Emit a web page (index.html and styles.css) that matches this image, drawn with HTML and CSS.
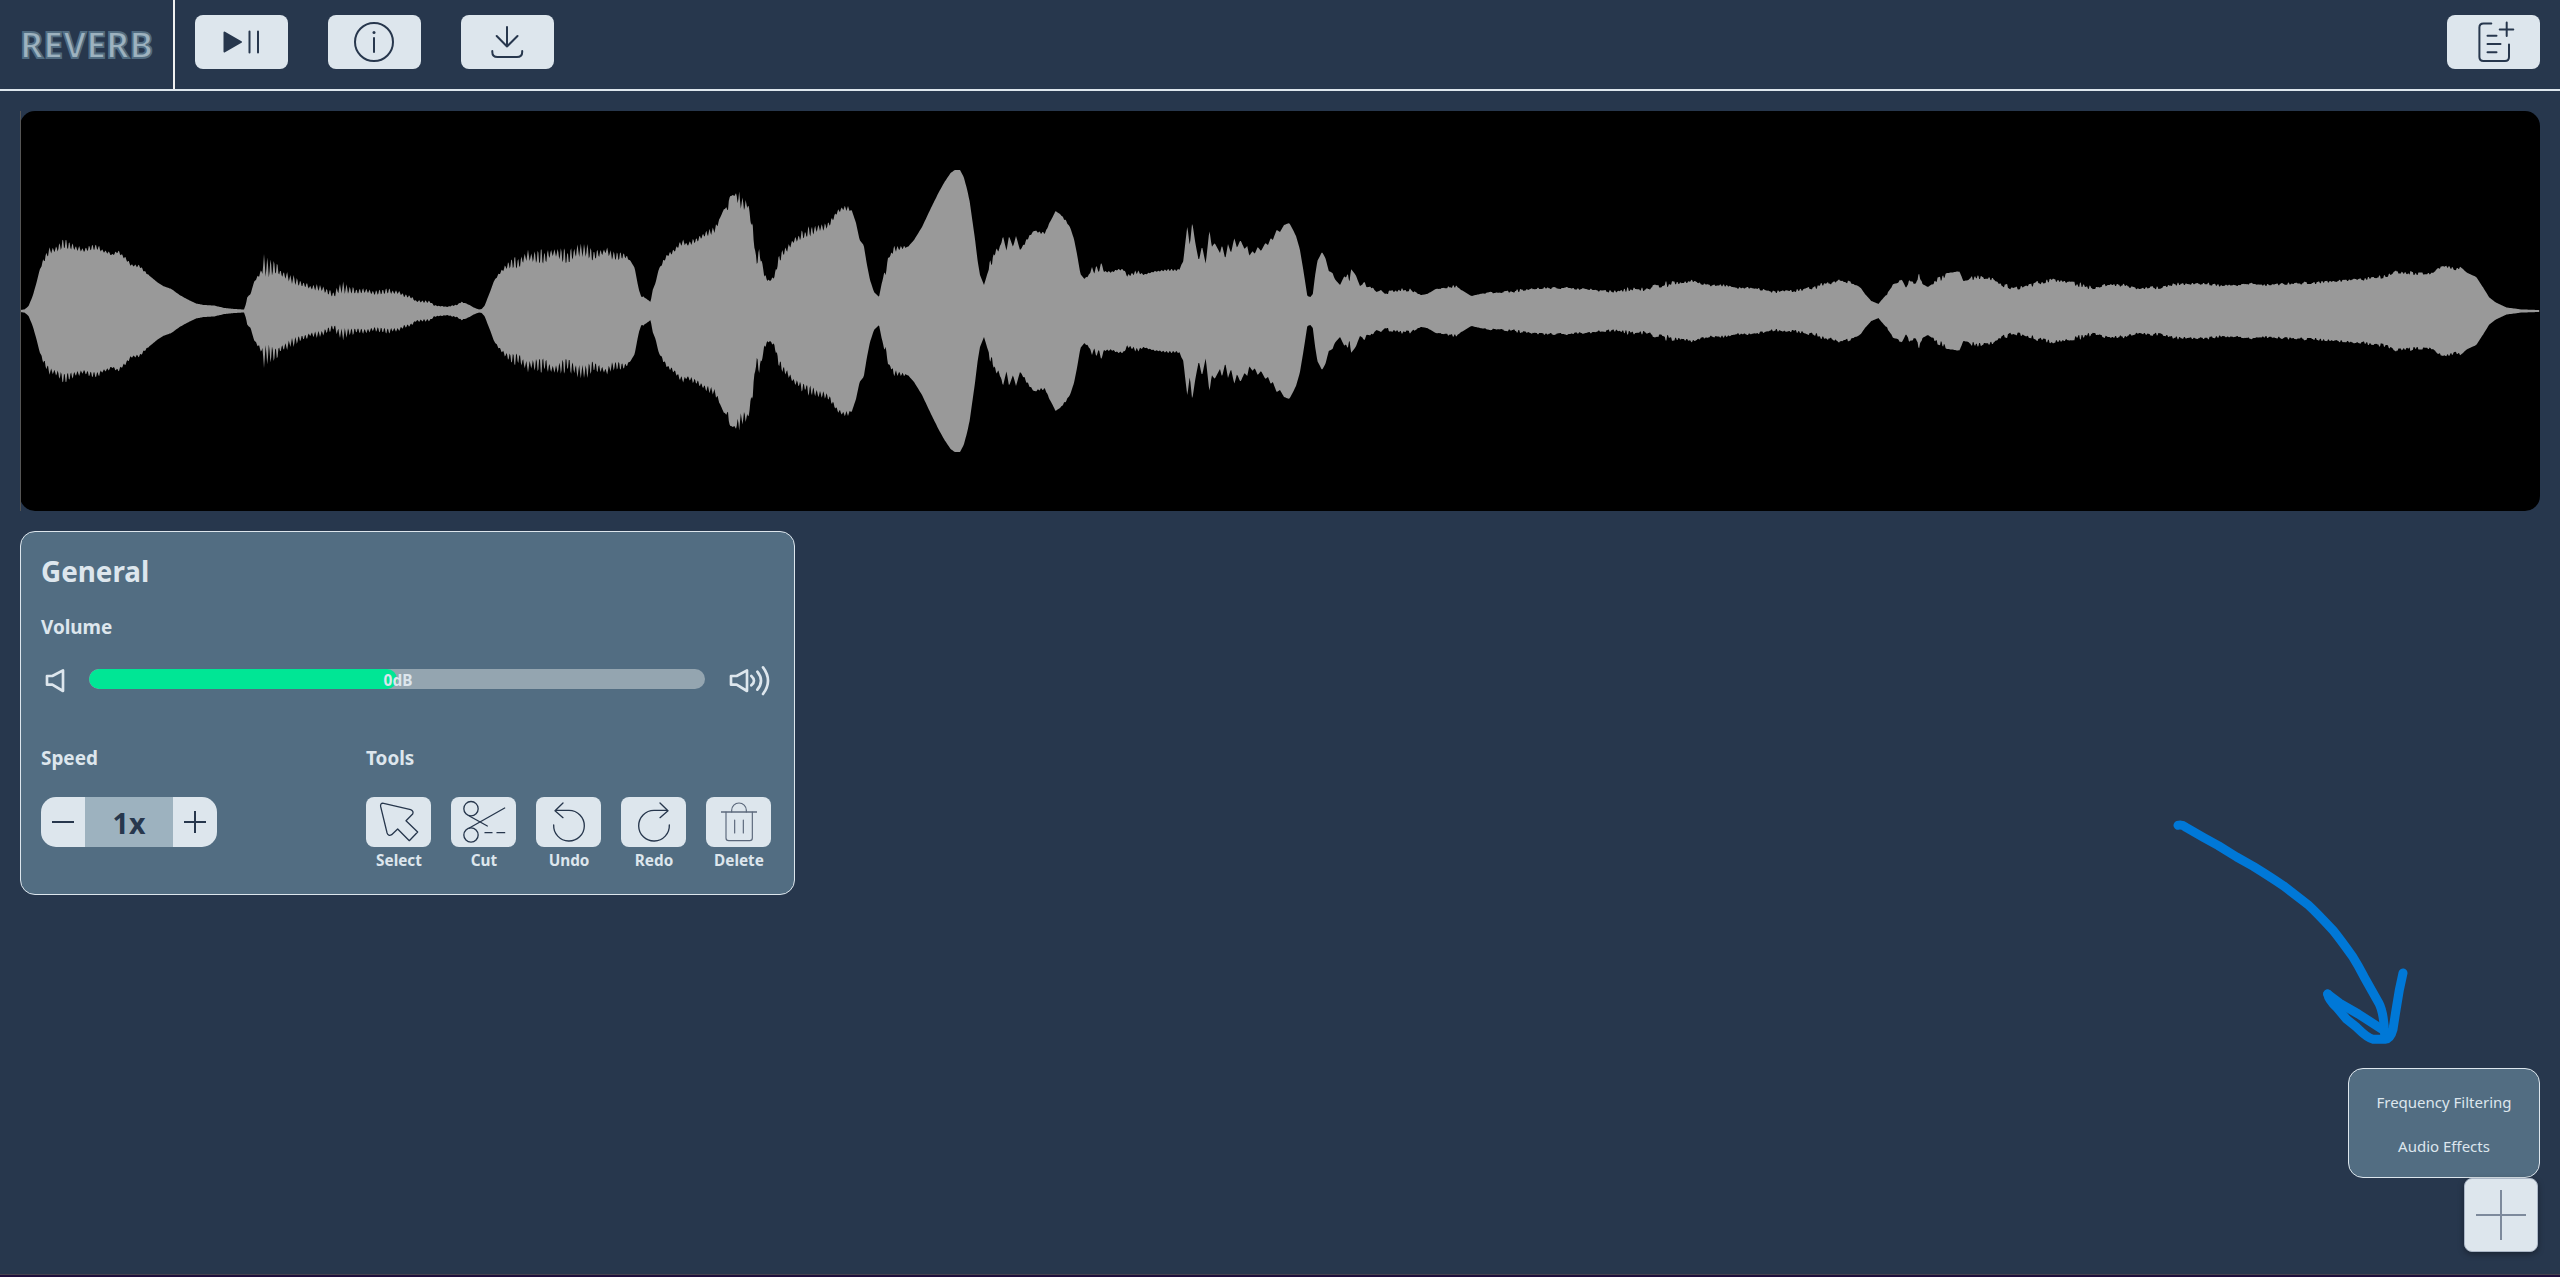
FILE: index.html
```html
<!DOCTYPE html>
<html lang="en">
<head>
<meta charset="utf-8">
<title>Reverb</title>
<link rel="stylesheet" href="styles.css">
</head>
<body>
<div class="app">
  <header class="topbar">
    <div class="logo"><span class="logo-text">REVERB</span></div>
    <nav class="actions">
      <button class="action" aria-label="Play or pause">
        <svg viewBox="0 0 93 54"><path class="solid" d="M29.5 17.500L46 27L29.5 36.500Z"/><path d="M54.5 16.5V37.500M63 16.500V37.500"/></svg>
      </button>
      <button class="action" aria-label="Info">
        <svg viewBox="0 0 93 54"><circle cx="46" cy="27" r="19"/><circle class="solid dot" cx="46" cy="17.500" r="1.500"/><path d="M46 23V37"/></svg>
      </button>
      <button class="action" aria-label="Download">
        <svg viewBox="0 0 93 54"><path d="M46 12V31.500M35.700 21L46 31.500L56.500 21M31.300 36V37Q31.300 42 36.500 42H56Q61.200 42 61.200 37V36"/></svg>
      </button>
      <button class="action action-end" aria-label="New file">
        <svg viewBox="0 0 93 54"><path d="M44.300 8.400H36.500Q32.400 8.400 32.400 12.500V42Q32.400 46 36.500 46H58Q62 46 62 42V29.500M59.700 7.500V21M52.700 14.400H66.300M40.500 20.700H49.500M40.500 29H53.500M40.500 37.300H49.500"/></svg>
      </button>
    </nav>
  </header>

  <section class="wave">
    <svg class="wave-svg" viewBox="20 -200 2520 400" preserveAspectRatio="none"><path id="wave-path"/></svg>
    <div class="cursor"></div>
  </section>

  <section class="panel">
    <h1 class="title">General</h1>
    <h2 class="label label-volume">Volume</h2>
    <div class="volume">
      <svg class="speaker-low" viewBox="0 0 144 120"><path d="M18 45H34L66 28V90L34 71H18Z"/></svg>
      <div class="slider"><div class="slider-fill" style="width:50%"></div><span class="slider-value">0dB</span></div>
      <svg class="speaker-high" viewBox="0 0 204 120"><path d="M78 45H95L126 28V90L95 71H78Z"/><path d="M139 45Q155 59 139 73M157 32Q179 59 157 86M174 19Q204 59 174 99"/></svg>
    </div>
    <div class="controls">
      <div class="group">
        <h2 class="label">Speed</h2>
        <div class="stepper">
          <button class="step" aria-label="Slower"><svg viewBox="0 0 44 50"><path d="M11 25H33"/></svg></button>
          <div class="step-value">1x</div>
          <button class="step" aria-label="Faster"><svg viewBox="0 0 44 50"><path d="M11 25H33M22 14V36"/></svg></button>
        </div>
      </div>
      <div class="group">
        <h2 class="label">Tools</h2>
        <div class="tools">
          <div class="tool"><button class="tool-btn"><svg viewBox="0 0 195 150"><path d="M44 29Q42 17 53 19L134 38Q144 42 140 51L120 71L155 105L130 131L95 96L77 113Q67 119 63 107Z"/></svg></button><span class="tool-name">Select</span></div>
          <div class="tool"><button class="tool-btn"><svg viewBox="0 0 195 150"><circle cx="60" cy="35" r="21.500"/><circle cx="60" cy="114" r="21.500"/><path d="M55 57L109 87M55 93L161 33M102 107H123M138 107H161"/></svg></button><span class="tool-name">Cut</span></div>
          <div class="tool"><button class="tool-btn"><svg viewBox="0 0 195 150"><path d="M53 84A46 46 0 1 0 99 40H58M81 18L57 41L81 62"/></svg></button><span class="tool-name">Undo</span></div>
          <div class="tool"><button class="tool-btn"><svg viewBox="0 0 195 150"><path d="M145 84A46 46 0 1 1 99 40H140M117 18L141 41L117 62"/></svg></button><span class="tool-name">Redo</span></div>
          <div class="tool"><button class="tool-btn"><svg class="thin" viewBox="0 0 195 150"><path d="M60 45V123Q60 131 68 131H131Q139 131 139 123V45M77 45V40A22 22 0 0 1 121 40V45M86 69V108M112 69V108"/><path class="lid" d="M45 45H153"/></svg></button><span class="tool-name">Delete</span></div>
        </div>
      </div>
    </div>
  </section>

  <div class="adder">
    <div class="menu">
      <div class="menu-item">Frequency Filtering</div>
      <div class="menu-item">Audio Effects</div>
    </div>
    <button class="fab" aria-label="Add module"><svg viewBox="0 0 74 74"><path d="M12 37H62M37 12V62"/></svg></button>
  </div>

  <svg class="arrow" viewBox="60 81 720 690"><path d="M84 106Q95 102 108 112L160 142L205 167L260 201L310 229Q360 260 400 287L475 345Q500 368 550 422Q570 447 608 500Q625 527 642 560L686 638Q702 668 704 735"/><path d="M533 612L570 640L625 672L712 728"/><path d="M533 612Q536 630 560 652L590 688L620 712Q652 744 670 748H705Q722 746 729 718L738 660L748 600L759 549"/></svg>
</div>
<div class="edge"></div>
<script src="wave.js"></script>
</body>
</html>
```
FILE: styles.css
```css
* { box-sizing: border-box; }
body {
  margin: 0;
  background: #27374d;
  color: #dde6ed;
  font-family: "Noto Sans", "Open Sans", sans-serif;
}
button { border: 0; padding: 0; margin: 0; background: #dde6ed; display: block; }
h1, h2 { margin: 0; }
svg { display: block; fill: none; stroke: #27374d; stroke-linecap: round; stroke-linejoin: round; }

.app { position: relative; height: 1274px; display: flex; flex-direction: column; overflow: hidden; }
.edge { height: 3px; background: #1e0f3c; border-top: 1px solid #47434e; }

.topbar { display: flex; height: 91px; border-bottom: 2px solid #dde6ed; }
.logo { width: 175px; border-right: 2px solid #f0f0f0; padding-left: 20px; display: flex; align-items: center; }
.logo-text {
  font-size: 35.5px; font-weight: 700; line-height: 50px; margin-top: -1px;
  color: #9db2bf; -webkit-text-stroke: 1.8px #526d82;
}
.actions { flex: 1; display: flex; gap: 40px; padding: 15px 20px 0; }
.action { width: 93px; height: 54px; border-radius: 8px; }
.action svg { width: 93px; height: 54px; stroke-width: 2; }
.action-end { margin-left: auto; }
.solid { fill: #27374d; }
.dot { stroke: none; }

.wave { position: relative; height: 400px; margin: 20px 20px 0; }
.wave-svg { width: 2520px; height: 400px; border-radius: 15px; background: #000; stroke: none; fill: #999; }
.cursor { position: absolute; left: 0; top: 0; width: 1px; height: 400px; background: #555; }

.panel {
  width: 775px; height: 364px; margin: 20px 0 0 20px; padding: 20px;
  background: #526d82; border: 1px solid #dde6ed; border-radius: 15px;
}
.title { font-size: 27.8px; line-height: 38px; }
.label { font-size: 18.9px; line-height: 28px; }
.label-volume { margin-top: 23px; }
.volume { display: flex; margin-top: 20px; height: 40px; }
.volume svg { stroke: #dde6ed; stroke-width: 8; height: 40px; }
.speaker-low { width: 48px; }
.speaker-high { width: 68px; }
.slider { position: relative; width: 616px; height: 20px; margin-top: 8px; border-radius: 10px; background: #94a5b0; overflow: hidden; }
.slider-fill { height: 20px; border-radius: 10px; background: #00e695; }
.slider-value { position: absolute; inset: 0; text-align: center; font-size: 15.4px; font-weight: 700; line-height: 23px; padding-left: 2px; }
.controls { display: flex; margin-top: 43px; gap: 149px; }
.stepper { display: flex; width: 176px; height: 50px; margin-top: 25px; border-radius: 15px; overflow: hidden; }
.step { width: 44px; height: 50px; }
.step svg { width: 44px; height: 50px; stroke-width: 2; stroke-linecap: butt; }
.step-value { width: 88px; background: #9db2bf; color: #27374d; font-size: 28.5px; font-weight: 700; line-height: 52px; text-align: center; }
.tools { display: flex; gap: 20px; margin-top: 25px; }
.tool { width: 65px; display: flex; flex-direction: column; align-items: center; gap: 2px; }
.tool-btn { width: 65px; height: 50px; border-radius: 8px; }
.tool-btn svg { width: 65px; height: 50px; stroke-width: 4; }
.tool-btn .thin { stroke: #5b687b; stroke-width: 3.5; }
.lid { stroke-width: 5; stroke-linecap: butt; }
.tool-name { font-size: 15.3px; font-weight: 700; line-height: 22px; padding-left: 1px; }

.adder { position: absolute; right: 20px; bottom: 22px; display: flex; flex-direction: column; align-items: flex-end; }
.menu {
  width: 192px; height: 110px; padding: 11px 0; text-align: center;
  background: #526d82; border: 1px solid #dde6ed; border-radius: 15px;
}
.menu-item { font-size: 15px; line-height: 44px; height: 44px; }
.fab { width: 74px; height: 74px; margin-right: 2px; border-radius: 8px; border: 1px solid #aab6c6; box-shadow: 0 2px 6px rgba(0, 0, 0, .35); }
.fab svg { width: 74px; height: 74px; margin: -1px; stroke: #7d8a9c; stroke-width: 2; stroke-linecap: butt; }

.arrow { position: absolute; left: 2170px; top: 817px; width: 240px; height: 230px; stroke: #0078d7; stroke-width: 27; }
```
FILE: wave.js
```js
// Envelope samples: x, peak height, and (when the edge is jagged) trough height.
const data = `20,1 24.5,1.5 28.6,5 32.7,15 36.7,29 39.6,41 43.7,54,48 49.8,63,57 55,64,59 60,68,60 63,72,62 68.6,71,61 73.5,68,61 77.5,65,60 84.5,62,59 89,67,60 96.7,67,61 102,62,59 108,60,57 112,57,55 118,62,58 124.5,55,52 130.6,48,45 135.5,46,44 140,46,43 145,40,38 151,34 157,29 163,25 171.4,22 179.6,16 187.8,11.5 196,7.5 204,6 214,5.5 224.5,3 234.7,2 244,1.5 246,7 247.3,14 250.6,17 254,29 258,36,33 262,42,38 263.3,53,35 269.4,57,33 274.3,51,36 278.8,44,36 285.7,38,32 291.8,37,27 298,33,25 304,29,24 310,26,22 316.3,28,20 321.6,27,20 326.5,22,17 334,20,13 338.8,26,18 344,29,17 350,25,17 357,22,17 367,23,18 373.5,20,16 379.6,22,16 387.8,23,17 394,21,17 399,21,17 404,17,14 410,16,13 416,11,9 424.5,11,8 430.6,10,8 434,6,5 441,5,4.5 448,4.5,4 453,6,5 458,7,6 460.4,10,8 465,8 469.4,6 473.5,3.5 479,1.5 481.6,2 484.5,5 490,19 494,30 500,40,37 506,48,42 512,54,42 518.4,56,41 524.5,59,50 530.6,60,50 538.8,61,46 545,63,46 551,61,55 557,61,54 564,62,46 569.4,62,47 575.5,66,54 585.7,67,54 592,63,49 598,61,53 606,63,58 612,60,51 618.4,59,50 624.5,58,53 630.6,50 634.7,43 637.5,28 640.4,17,14 645.3,13 650.6,9 652.7,21 655.5,28 658.8,42 663,50,47 667,57,54 673,61,57 679,69,64 684,72,66 687,67,65 691.4,71,66 697.6,74,69 703.7,78,74 709.8,82,75 716,86,79 720,93 724,102 728,107,100 730,115 736.3,118,115 739,118,100 742.4,116,104 745.3,113,98 748.6,106 750.6,92,88 752.7,90,78 754.7,65,60 756.7,52,45 758.8,66,52 762,49,48 765,36,30 770,30 775,38,33 778,53,45 783.3,64,55 788,68,60 793.5,73,68 801.6,80,71 805.7,80,73 811,88,74 818,85,80 824,88,80 830,90,85 836.3,100,96 842.4,104,101 846.5,107,100 852,100 856,88 859.6,71 863.7,66 867,46 870,31 874,19 879,14 881.6,27 883.3,37,33 885.7,40,35 888,53 890.6,57,54 893.5,68,58 899.6,64,61 903.7,66,62 907.8,64 914,71 922,84 930,101 938.4,118 944.5,129 950.6,138 954.7,141 960,141 963.7,134 967,122 969.8,109 972,93 975,72 977.5,51 980,36 984,26 987.3,37 990,52,44 992.2,52,46 995.5,62,58 999.6,65,60 1003,75 1006.5,60 1009,75 1013,64 1016,75 1020,61 1024,68,65 1029.4,76,74 1034.3,81,80 1040.4,79,77 1045.3,80,77 1049.4,88 1052.7,94 1055.5,100 1060,97 1065,92,90 1070,84 1074,72 1077,57 1080.4,37 1084.5,32 1089.4,38,35 1092,44 1094.3,37 1096.3,46 1098.8,38 1101.2,49 1103.7,40,39 1111.8,40,38 1118,42,41 1124,42,40 1127.3,36,34 1137.6,41,37 1143.7,37,36 1154.7,40,39 1167,42,40 1179,42,40 1183.3,50 1185.3,68 1187.3,85 1189.8,65 1192.2,89 1195.5,67 1198.8,50 1202,65 1205.7,47 1209.4,81 1211.8,64 1214.7,68 1220,58 1222,66 1225.3,52 1228,67 1231,58 1234.3,73 1237,63 1240.4,71 1244.5,62 1247.3,65 1249.3,55 1252.6,60 1254.7,57 1257.7,64 1261,60 1265.3,68 1268,66 1270.7,73 1272.8,71 1276.6,81 1280,79 1284,86 1289.2,88 1292.6,82 1296,75 1299.8,62 1303,43 1305.2,29 1307.3,15 1310.3,14 1312.8,17 1315,35 1317.4,50 1322,59 1325.4,53 1328.8,40 1332.6,38 1334.7,32 1340,26 1344.4,35 1346,33 1347.7,38 1349.4,28 1351,42 1355.7,36 1360,25 1364.6,29,26 1366.3,24 1372.6,24,21 1376.8,19 1381,21 1385,17 1389.4,20,17 1400,22,20 1410.5,22,20 1421,16 1427.3,17 1435.7,22 1444,23.5,22.5 1456,26,24 1463,20 1471.5,15 1480,17 1492.5,19.5,18 1513.6,21,19 1539,23.5,22 1568,24,22.5 1598,21.5,20 1614.6,20.5,18.5 1625,23,20 1644,23,20.5 1667,29,25 1680,29,26 1692.4,31,28 1707,26.5,25 1724,27,24 1736.6,23.5,22.5 1753.5,24,22.5 1770,20,18.5 1791,20.5,18 1806,23,21.5 1818.7,27,23 1829,29,27 1842.7,32,29 1854.5,27.5,26 1860.8,23 1865,17 1871.3,10 1878.5,7 1880,9 1884.3,14 1888.7,20,17 1893,27 1898,28 1901.7,34,31 1906,23 1909,30,27 1915.6,32,28 1919,38,34 1922.5,27 1927.7,24 1934.2,31,28 1943.7,36,32 1947,38 1959.4,40,39 1963.3,30 1969.8,33,30 1975.8,37,33 1984,34,32 1992.7,33,31 2001.4,28,25 2010,25.5,22 2019.6,24,21 2031.8,28,25 2042.6,31,28 2052.6,32,30 2064.3,30,29 2075,30,26 2092.5,24,22 2110,28,25 2122,28,25 2139.3,22,21 2146.7,25,23 2162,24,22 2175,28,26 2196.6,28.5,27 2214,28,25 2235.6,26,25 2250.8,28,26.5 2270.3,26.5,25 2292,29,27 2313.6,29,27 2328.8,31,29 2348.3,32,30 2370,34,31 2387.4,36,34 2398.2,41,38 2413.4,39,36 2428.6,38,36 2439.4,44,42 2448,46,44 2454.6,43,40 2460.2,44,42 2467.6,38 2476.3,34 2482.8,24 2489.3,13.5 2495.8,8.5 2506.6,3.5 2521.8,1.5 2540,1`;
const points = data.split(' ').map(p => p.split(',').map(Number)).map(([x, hi, lo = hi]) => [x, hi, lo]);

const noise = n => { const s = Math.sin(n * 127.1) * 43758.5453; return s - Math.floor(s); };

const edge = [];
let i = 0;
for (let x = 20; x <= 2540; x += 0.8) {
  while (i < points.length - 2 && x > points[i + 1][0]) i++;
  const a = points[i], b = points[i + 1];
  const t = (x - a[0]) / (b[0] - a[0]);
  const hi = a[1] + (b[1] - a[1]) * t;
  const lo = a[2] + (b[2] - a[2]) * t;
  // Narrow teeth, about 3.3px apart; irregular ones on the quieter second half.
  let mix = 0.5 + 0.5 * Math.cos(x * 1.904);
  if (x > 1360) mix = noise(Math.round(x / 1.6)) * 1.5 - 0.3;
  else mix *= 0.75 + 0.45 * noise(Math.round(x / 3.3));
  edge.push([x.toFixed(1), lo + (hi - lo) * mix]);
}
const upper = edge.map(([x, y]) => `${x} ${(-y).toFixed(1)}`);
const lower = edge.map(([x, y]) => `${x} ${y.toFixed(1)}`).reverse();
document.getElementById('wave-path').setAttribute('d', `M${upper.join('L')}L${lower.join('L')}Z`);
```
